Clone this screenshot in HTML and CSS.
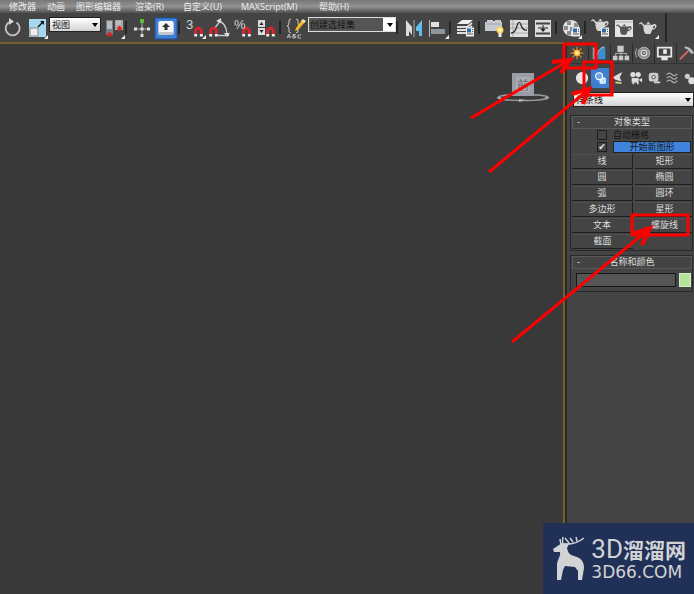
FILE: index.html
```html
<!DOCTYPE html>
<html lang="zh-CN">
<head>
<meta charset="utf-8">
<title>3ds Max</title>
<link rel="stylesheet" href="styles.css">
</head>
<body>
<svg class="defs" aria-hidden="true">
  <symbol id="magnet" viewBox="0 0 8 9"><path d="M1.500 7V4a2.500 2.500 0 0 1 5 0v3" fill="none" stroke="#d8262e" stroke-width="2.600"/><path d="M.2 6.800h2.600V9H.2zM5.200 6.800h2.600V9H5.200z" fill="#eee"/></symbol>
  <symbol id="teapot" viewBox="0 0 18 12"><path d="M4.500 4.500L2 1.500.5 2.500 0 1.500 2.200 0 5.500 3h7.500c2-1.800 5-1 4.500 1.500-.4 2-2.400 3-4.500 3.500L11.500 12h-5C5 10 4.300 8 4.500 4.500zM14 6.500c2-.5 2.500-1.500 2-2.200-.6-.5-1.500 0-2 .7z" fill="currentColor" fill-rule="evenodd"/><path d="M6 2.500q3.500-2.500 6.500 0zM8.500 0h1.500v1.500H8.500z" fill="currentColor"/></symbol>
  <symbol id="panel" viewBox="0 0 8 9"><path d="M0 0h8v9H0z" fill="#eee"/><path d="M1 1h4v4H1z" fill="#2c6db0"/><path d="M6 2h1M6 4h1M1 6.500h6" stroke="#555"/></symbol>
  <symbol id="down" viewBox="0 0 6 4"><path d="M0 0h6L3 4z" fill="#000"/></symbol>
</svg>

<nav class="menubar">
  <a href="#">修改器</a><a href="#">动画</a><a href="#">图形编辑器</a><a href="#">渲染(R)</a><a href="#">自定义(U)</a><a href="#">MAXScript(M)</a><a href="#">帮助(H)</a>
</nav>

<div class="toolbar">
  <button class="tool" aria-label="旋转"><svg viewBox="0 0 24 24"><path d="M16.500 6.500a7 7 0 1 1-6-.8" fill="none" stroke="#c4c4c4" stroke-width="1.800"/><path d="M9 2l5 3.500L9 9z" fill="#d4d4d4"/></svg></button>
  <button class="tool" aria-label="缩放"><svg viewBox="0 0 24 24"><path d="M5 3h17v18H5z" fill="#a6d8f0"/><path d="M6 12h8v8H6z" fill="#eee" stroke="#888"/><path d="M14 11l5-5" stroke="#111" stroke-width="1.500"/><path d="M16 5h4v4z" fill="#111"/><path d="M24 19v4h-4z" fill="#eee"/></svg></button>
  <span class="combo combo-view"><select aria-label="参考坐标系"><option>视图</option></select><svg><use href="#down"/></svg></span>
  <button class="tool" aria-label="使用轴点中心"><svg viewBox="0 0 24 24"><path d="M5 4h7v15H5z" fill="#757d86"/><path d="M14 4h8v10h-8z" fill="#a8a8aa"/><path d="M6 5h5v8H6zM15 5h5v4h-5z" fill="#b9bdc2"/><path d="M6 18.500h5M8.500 16v5M16 12.500h5M18.500 10v5" stroke="#d22" stroke-width="2"/><path d="M24 19v4h-4z" fill="#eee"/></svg></button>
  <i class="sep"></i>
  <button class="tool" aria-label="选择并操纵"><svg viewBox="0 0 24 24"><path d="M12 5v15M5 13h14" stroke="#aaa"/><path d="M10 3h4v4h-4z" fill="#54bd3c"/><path d="M4 11.500h3v3H4zM17 11.500h3v3h-3zM10.500 18h3v3h-3zM10.500 11.500h3v3h-3z" fill="#ddd"/></svg></button>
  <button class="tool" aria-label="键盘快捷键覆盖切换" aria-pressed="true"><svg viewBox="0 0 24 24"><path d="M1 2h22v21H1z" fill="#3d80d8" stroke="#1d4f9c"/><rect x="4" y="5" width="16" height="14" rx="2" fill="#c4c7cc"/><rect x="5" y="5" width="14" height="11" rx="1.500" fill="#f7f7f7"/><path d="M12 7l4 4h-2.500v3h-3v-3H8z" fill="#333"/></svg></button>
  <i class="sep"></i>
  <button class="tool snap" aria-label="捕捉开关"><b>3</b><svg viewBox="0 0 24 24"><use href="#magnet" x="11" y="10" width="9" height="11"/><path d="M23 19v4h-4z" fill="#eee"/></svg></button>
  <button class="tool" aria-label="角度捕捉切换"><svg viewBox="0 0 24 24"><path d="M7 13L14 4M11 19.500h11M11 5q8 1 9 13" fill="none" stroke="#ccc" stroke-width="1.300"/><path d="M9 5l5-3v5zM17 17h6l-3 4z" fill="#ddd"/><use href="#magnet" x="2" y="10" width="9" height="11"/></svg></button>
  <button class="tool snap" aria-label="百分比捕捉切换"><b>%</b><svg viewBox="0 0 24 24"><use href="#magnet" x="11" y="10" width="9" height="11"/></svg></button>
  <button class="tool" aria-label="微调器捕捉切换"><svg viewBox="0 0 24 24"><path d="M3 4h7v7H3zM3 12h7v7H3z" fill="#ddd"/><path d="M4.500 9h4l-2-3zM4.500 14h4l-2 3z" fill="#222"/><use href="#magnet" x="11" y="10" width="9" height="11"/></svg></button>
  <i class="sep"></i>
  <button class="tool" aria-label="编辑命名选择集"><svg viewBox="0 0 24 24"><path d="M7 3Q4 3 5 7q0 3-2 3 2 0 2 3-1 4 2 4M12 3q3 0 2 4 0 3 2 3-2 0-2 3 1 4-2 4" fill="none" stroke="#ccc"/><path d="M18 4l3 2-7 8-3 1 1-3z" fill="#f3b829"/><path d="M17 5l2-2 3 2-2 2z" fill="#f6dfa0"/><path d="M3 22l2-4 2 4M4 21h2M9 22v-3.500h2.500L9 20l3 .5L11 22zM17 19h-3v3h3" fill="none" stroke="#bbb"/></svg></button>
  <span class="combo combo-set"><select aria-label="命名选择集"><option>创建选择集</option></select><svg><use href="#down"/></svg></span>
  <i class="sep"></i>
  <button class="tool" aria-label="镜像"><svg viewBox="0 0 24 24"><path d="M5 4l6 7v8l-3-4v5H5z" fill="#ddd"/><path d="M13 4v17" stroke="#aaa"/><path d="M21 4l-6 7v4h3v5h3z" fill="#63bce8"/></svg></button>
  <button class="tool" aria-label="对齐"><svg viewBox="0 0 24 24"><path d="M4.500 4v17" stroke="#bbb"/><path d="M6 6h8v5H6z" fill="#e0e0e0"/><path d="M6 13h14v5H6z" fill="#8e969c"/><path d="M24 19v4h-4z" fill="#eee"/></svg></button>
  <i class="sep"></i>
  <button class="tool" aria-label="层管理器"><svg viewBox="0 0 24 24"><path d="M8 4h11l-5 4H3z" fill="#eee"/><path d="M3 11h10l5-4M3 14h10l5-4M3 17h9" fill="none" stroke="#ddd" stroke-width="1.800"/><use href="#panel" x="12" y="11" width="8" height="10"/></svg></button>
  <i class="sep"></i>
  <button class="tool" aria-label="石墨建模工具"><svg viewBox="0 0 24 24"><path d="M4 4h6v1h2V4h6v2h1v9H2V6h2z" fill="#c5cad2"/><path d="M3 8h15" stroke="#9da3ac"/><circle cx="17" cy="14" r="3.500" fill="#ffd44d"/><circle cx="17" cy="14" r="2" fill="#fff3b0"/><path d="M15.500 17h3v4h-3z" fill="#eee"/></svg></button>
  <button class="tool" aria-label="曲线编辑器"><svg viewBox="0 0 24 24"><path d="M3 4h18v17H3z" fill="#ddd"/><path d="M6 4v17M3 8h18M3 12h18M3 17h18" stroke="#aaa"/><path d="M4 17q4 0 6-7t4-1 6 5" fill="none" stroke="#222" stroke-width="1.200"/></svg></button>
  <button class="tool" aria-label="图解视图"><svg viewBox="0 0 24 24"><path d="M4 4h16v17H4z" fill="#ddd"/><path d="M5 7.500h14M5 17.500h14" stroke="#444" stroke-width="2"/><path d="M7 12h10M12 9v6" stroke="#222"/><path d="M9.500 13h5L12 16z" fill="#222"/></svg></button>
  <i class="sep"></i>
  <button class="tool" aria-label="材质编辑器"><svg viewBox="0 0 24 24"><circle cx="11" cy="12" r="8" fill="#e4e4e4"/><path d="M7 5h4v4H7zM14 7h4v4h-4zM4 10h4v4H4zM10 11h4v4h-4zM7 15h4v4H7z" fill="#8d8d8d"/><use href="#panel" x="12" y="11" width="8" height="10"/><path d="M22 19v4h-4z" fill="#eee"/></svg></button>
  <i class="sep"></i>
  <button class="tool" aria-label="渲染设置"><svg viewBox="0 0 24 24"><use href="#teapot" x="2" y="3" width="18" height="12"/><use href="#panel" x="12" y="11" width="8" height="10"/></svg></button>
  <button class="tool" aria-label="渲染帧窗口"><svg viewBox="0 0 24 24"><path d="M2 4h18v17H2z" fill="#e4e4e4"/><path d="M2 6h18" stroke="#aaa"/><use href="#teapot" class="dark" x="3" y="8" width="16" height="11"/></svg></button>
  <button class="tool" aria-label="渲染产品"><svg viewBox="0 0 24 24"><use href="#teapot" x="2" y="6" width="18" height="12"/><path d="M22 19v4h-4z" fill="#eee"/></svg></button>
  <i class="sep sep-end"></i>
</div>

<div class="workspace">
  <main class="viewport">
    <svg class="viewcube" viewBox="0 0 56 32" role="img" aria-label="视图方位">
      <ellipse cx="27" cy="25.500" rx="25" ry="3" fill="none" stroke="#999ca0" stroke-width="1.500"/>
      <path d="M16 1h22v23H16z" fill="#9b9da6"/><path d="M20 5h14v15H20z" fill="#aaacb3"/>
      <text x="27" y="18" text-anchor="middle" class="cube-label">前</text>
      <path d="M0 26l5-1v2zM49 25l5 1-5 1zM23 27l7 1-7 2z" fill="#b5b5b5"/>
    </svg>
  </main>

  <aside class="command">
    <div class="tabs">
      <button aria-label="创建" aria-pressed="true"><svg viewBox="0 0 20 20"><path d="M10 3v14M3 10h14M5 5l10 10M15 5L5 15" stroke="#d47a28" stroke-width="1.500"/><circle cx="10" cy="10" r="3.500" fill="#ffb52e"/><circle cx="10" cy="10" r="2" fill="#fff4b0"/></svg></button>
      <button aria-label="修改"><svg viewBox="0 0 20 20"><path d="M3 17V4h5v13z" fill="#999"/><path d="M8 17Q9 7 15 3h2v14z" fill="#3b8cd0"/><path d="M7 17Q8 6 15 3" fill="none" stroke="#eee"/></svg></button>
      <button aria-label="层次"><svg viewBox="0 0 20 20"><path d="M6 2h7v7H6zM1 13h5v5H1zM7.500 13h5v5h-5zM14 13h5v5h-5z" fill="#c8c8c8"/><path d="M10 8v5M4 13v-2.500h12V13" fill="none" stroke="#bbb"/></svg></button>
      <button aria-label="运动"><svg viewBox="0 0 20 20"><circle cx="11" cy="10" r="6.500" fill="#8d8d8d" stroke="#bbb"/><circle cx="11" cy="10" r="3" fill="#444" stroke="#ddd" stroke-width="1.500"/><circle cx="11" cy="10" r="1" fill="#eee"/><path d="M3 5q-3 5 0 10" fill="none" stroke="#bbb"/></svg></button>
      <button aria-label="显示"><svg viewBox="0 0 20 20"><path d="M1 3h17v12H1zM6 15h7v3H6z" fill="#e8e8e8"/><path d="M3 5h13v8H3z" fill="#444"/><path d="M8 6h4v5H8z" fill="#eee"/></svg></button>
      <button aria-label="工具"><svg viewBox="0 0 20 20"><path d="M2 17L12 7" stroke="#d66" stroke-width="2"/><path d="M7 3q6-1 11 7l-3 1-4-5-3-1z" fill="#bbb"/></svg></button>
    </div>
    <div class="categories">
      <button aria-label="几何体"><svg viewBox="0 0 16 16"><circle cx="8" cy="8" r="7" fill="#e4e4e4"/></svg></button>
      <button class="active" aria-label="图形" aria-pressed="true"><svg viewBox="0 0 16 16"><path d="M8 8h6v6H8z" fill="#bcd8f5" stroke="#fff"/><circle cx="7" cy="6" r="4" fill="#6fa5e2" stroke="#fff" stroke-width="1.300"/><path d="M6 9l5 3" stroke="#fff"/></svg></button>
      <button aria-label="灯光"><svg viewBox="0 0 16 16"><path d="M2 7l7-4 4-2-3 6 2 5-7-2z" fill="#ddd"/><path d="M5 13l7 1" stroke="#e6d67b" stroke-width="2"/></svg></button>
      <button aria-label="摄影机"><svg viewBox="0 0 16 16"><circle cx="4.500" cy="4" r="3" fill="#ddd"/><circle cx="10.500" cy="4" r="3" fill="#ddd"/><path d="M3 8h8v5H3zM11 10l4-2v5zM4 13h2v2H4zM9 13h2v2H9z" fill="#ddd"/></svg></button>
      <button aria-label="辅助对象"><svg viewBox="0 0 16 16"><rect x="2" y="2" width="11" height="10" rx="3" fill="#ccc"/><circle cx="7.500" cy="7" r="2" fill="#ddd" stroke="#444"/><path d="M8 13h7" stroke="#ddd" stroke-width="2"/></svg></button>
      <button aria-label="空间扭曲"><svg viewBox="0 0 16 16"><path d="M2 4q3-3 6 0t6-1M2 8q3-3 6 0t6-1M2 12q3-3 6 0t6-1" fill="none" stroke="#aaa" stroke-width="1.500"/></svg></button>
      <button aria-label="系统"><svg viewBox="0 0 16 16"><circle cx="5" cy="6" r="3" fill="#ccc"/><circle cx="10" cy="11" r="4" fill="#ddd"/></svg></button>
    </div>
    <span class="combo combo-kind"><select aria-label="图形类别"><option>样条线</option></select><svg><use href="#down"/></svg></span>

    <section class="rollout">
      <h2><span>-</span>对象类型</h2>
      <div class="options">
        <input type="checkbox" id="autogrid"><label for="autogrid">自动栅格</label>
        <input type="checkbox" id="newshape" checked><label for="newshape" class="lit">开始新图形</label>
      </div>
      <div class="types">
        <button>线</button><button>矩形</button>
        <button>圆</button><button>椭圆</button>
        <button>弧</button><button>圆环</button>
        <button>多边形</button><button>星形</button>
        <button>文本</button><button>螺旋线</button>
        <button>截面</button>
      </div>
    </section>

    <section class="rollout">
      <h2><span>-</span>名称和颜色</h2>
      <div class="naming">
        <input type="text" aria-label="名称"><button class="swatch" aria-label="颜色"></button>
      </div>
    </section>
  </aside>
</div>

<svg class="marks" viewBox="0 0 234 360" aria-hidden="true">
  <path d="M11 118L108 61M29 172L128 90M52 342L188 230"/>
  <path d="M92 62L110 60L101 73M112 94L129 89L123 104M172 234L190 228L182 245" stroke-width="4"/>
  <path d="M104 44h32v24h-32zM124 62h28v33h-28zM172 215h56v20h-56z"/>
</svg>

<div class="brand">
  <svg viewBox="0 0 34 46" aria-hidden="true">
    <path d="M10 7L1 13l1 3 6 0c1 4-3 8-3 13l0 15h4l2-10 2-4 10 1 3 4v9h4l2-12c0-8-4-10-10-12-4-1-6-3-7-8l2-4z" fill="#d2d3d5"/>
    <path d="M9 9L8 3M11 9q-1-5 0-8M12 8q11 1 20-6M17 7l-4-5M21 6l-3-4M25 5l-1-4" fill="none" stroke="#d2d3d5" stroke-width="1.500"/>
  </svg>
  <div class="brand-text">
    <div class="brand-name"><span>3D</span>溜溜网</div>
    <div class="brand-site">3D66.COM</div>
  </div>
</div>
</body>
</html>
```

FILE: styles.css
```css
* { box-sizing: border-box; }

body {
  position: relative;
  display: flex;
  flex-direction: column;
  min-height: 100vh;
  margin: 0;
  overflow: hidden;
  background: #393939;
  color: #ddd;
  font: 9px/12px "Liberation Sans", "Noto Sans CJK SC", sans-serif;
}

button, input, select { font: inherit; color: inherit; margin: 0; padding: 0; }
button { border: 0; background: none; }
.defs { position: absolute; width: 0; height: 0; }

.menubar {
  display: grid;
  grid-template-columns: 38px 29px 59px 48px 58px 78px auto;
  height: 13px;
  padding-left: 9px;
  background: linear-gradient(#777, #929292 50%, #505050);
  font-family: "Open Sans", "Noto Sans CJK SC", sans-serif;
  line-height: 13px;
}
.menubar a { color: #eee; text-decoration: none; white-space: nowrap; }

.toolbar {
  display: flex;
  align-items: center;
  height: 29px;
  background: #444;
}
.tool { position: relative; flex: none; width: 24px; height: 24px; color: #d5d5d5; }
.tool svg { display: block; width: 24px; height: 24px; }
.tool .dark { color: #555; }
.snap b { position: absolute; left: 3px; top: 3px; font-weight: normal; font-size: 13px; }
.sep { flex: none; width: 5px; height: 13px; border-left: 2px solid #252525; }
.sep-end { height: 29px; margin-left: 4px; }

.combo { position: relative; display: block; flex: none; color: #111; }
.combo select {
  display: block;
  width: 100%;
  height: 15px;
  padding-left: 2px;
  border: 1px solid #222;
  border-radius: 0;
  appearance: none;
  background: linear-gradient(#fff, #d4d4d4);
}
.combo svg { position: absolute; right: 3px; top: 6px; width: 6px; height: 4px; pointer-events: none; }
.combo-view { width: 52px; margin: 0 0 6px 1px; }
.combo-set { width: 88px; margin-bottom: 6px; }
.combo-set select { padding-left: 1px; background: linear-gradient(90deg, #555 74px, #fff 74px); border-color: #ddd; }

.workspace { display: flex; flex: 1; }
.viewport {
  position: relative;
  flex: 1;
  border: solid #6f6129;
  border-width: 2px 2px 0 0;
  background: #393939;
}
.viewcube { position: absolute; right: 11px; top: 28px; width: 56px; height: 32px; }
.cube-label { font-size: 12px; fill: #6b6d75; }

.command {
  flex: none;
  width: 129px;
  padding-top: 1px;
  border-left: 2px solid #292929;
  background: #444;
}
.tabs { display: flex; height: 21px; overflow: hidden; border-bottom: 1px solid #333; }
.tabs button { flex: none; width: 22px; border-right: 1px solid #2b2b2b; }
.tabs svg { display: block; width: 18px; height: 18px; margin: 0 1px; }
.categories { display: flex; height: 28px; padding: 4px 0 4px 6px; overflow: hidden; }
.categories button { flex: none; width: 18px; height: 20px; }
.categories svg { display: block; width: 14px; height: 14px; margin: 0 auto; }
.categories .active { background: #3e7fd0; }
.combo-kind { margin-left: 6px; }

.rollout { margin: 8px 1px 0 3px; border: 1px solid #292929; }
.rollout + .rollout { margin-top: 4px; }
.rollout h2 {
  position: relative;
  margin: 0 0 0 1px;
  border: 1px solid #5a5a5a;
  font: inherit;
  line-height: 11px;
  text-align: center;
}
.rollout h2 span { position: absolute; left: 4px; }

.options {
  display: grid;
  grid-template-columns: 10px 1fr;
  grid-auto-rows: 12px;
  align-items: center;
  column-gap: 6px;
  padding: 0 1px 0 26px;
  color: #161616;
}
.options input {
  display: grid;
  place-content: center;
  width: 10px;
  height: 10px;
  appearance: none;
  border: 1px solid #1d1d1d;
}
.options input:checked::before { content: "✔"; color: #eee; font: 9px/9px "DejaVu Sans", sans-serif; }
.options .lit { border: 1px solid #222; background: #3f83dd; line-height: 10px; text-align: center; }

.types { display: grid; grid-template-columns: 61px 1fr; gap: 1px 2px; padding: 1px 0 1px 1px; }
.types button {
  height: 15px;
  border: solid #1f1f1f;
  border-width: 0 1px 1px 0;
  box-shadow: inset 0 1px #505050;
  line-height: 14px;
}
.types button:nth-child(even) { padding-left: 2px; border-right: 0; }
.types button:last-child { border-right: 0; }

.naming { display: flex; align-items: center; gap: 3px; padding: 4px 1px 4px 5px; }
.naming input { flex: 1; min-width: 0; height: 14px; border: 1px solid #191919; background: #555; }
.swatch { width: 12px; height: 14px; background: #b5e39b; border: 1px solid #d4edc6; }

.marks {
  position: absolute;
  right: 0;
  top: 0;
  width: 234px;
  height: 360px;
  fill: none;
  stroke: #f00;
  stroke-width: 3;
  pointer-events: none;
}

.brand {
  position: absolute;
  right: 0;
  bottom: 0;
  display: flex;
  gap: 5px;
  padding: 13px 8px 12px 9px;
  background: #213056;
  color: #d2d3d5;
}
.brand svg { width: 34px; height: 46px; }
.brand-text { white-space: nowrap; }
.brand-name { font: bold 21px/26px "Noto Sans CJK SC", sans-serif; }
.brand-name span { font: 26px/26px Roboto, sans-serif; }
.brand-site { font: 17px/20px "DejaVu Sans", sans-serif; }
```
